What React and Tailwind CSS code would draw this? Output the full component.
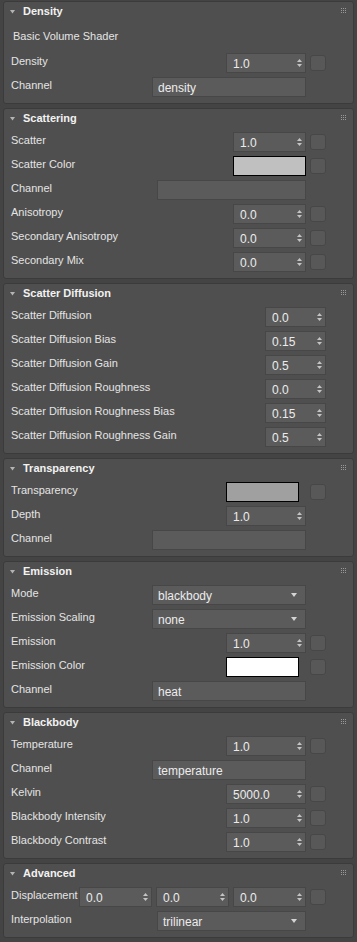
import React from 'react'

const font = { fontFamily: '"Liberation Sans", Arial, sans-serif' }

function Grip() {
  return (
    <div className="ml-auto mr-[7px] mt-[6px] grid grid-cols-3 gap-[1px]">
      {Array.from({ length: 9 }).map((_, i) => (
        <span key={i} className="block w-[1px] h-[1px] bg-[#9a9a9a]" />
      ))}
    </div>
  )
}

function Panel({ title, children }) {
  return (
    <div className="bg-[#4f4f4f] border border-[#3b3b3b] rounded-[3px]">
      <div className="flex items-start h-[23px] pl-[6px]">
        <svg width="5" height="4" viewBox="0 0 5 4" className="mt-[8px]">
          <path d="M0 0 H5 L2.5 3.5 Z" fill="#b4b4b4" />
        </svg>
        <span className="ml-[8px] pt-[2px] text-[11px] leading-[14px] font-bold text-[#f2f2f2]">{title}</span>
        <Grip />
      </div>
      <div className="flex flex-col gap-[4px] pb-[6px]">{children}</div>
    </div>
  )
}

function Row({ label, children, check, spacer = true }) {
  return (
    <div className="flex items-start h-5 pl-[7px] pr-[27px]">
      <span className="flex-1 text-[11px] leading-4 text-[#e4e4e4] whitespace-nowrap">{label}</span>
      {children}
      {check ? (
        <div className="ml-[4px] w-4 h-4 mt-[2px] rounded-[3px] bg-[#585858] border border-[#474747]" />
      ) : spacer ? (
        <div className="ml-[4px] w-4" />
      ) : null}
    </div>
  )
}

function Spinner({ value, w = 'w-[80px]' }) {
  return (
    <div className={`${w} h-5 flex items-center bg-[#5b5b5b] border border-[#474747] pl-[6px] pr-[3px]`}>
      <span className="flex-1 text-[12px] text-[#ececec] leading-none pt-[2px]">{value}</span>
      <svg width="5" height="8" viewBox="0 0 5 8">
        <path d="M0 3 L2.5 0 L5 3 Z" fill="#c4c4c4" />
        <path d="M0 5 L5 5 L2.5 8 Z" fill="#c4c4c4" />
      </svg>
    </div>
  )
}

function TextBox({ value = '', w = 'w-[154px]' }) {
  return (
    <div className={`${w} h-5 flex items-center bg-[#5b5b5b] border border-[#474747] pl-[5px]`}>
      <span className="text-[12px] text-[#ececec] leading-none pt-[2px]">{value}</span>
    </div>
  )
}

function Dropdown({ value, w = 'w-[154px]' }) {
  return (
    <div className={`${w} h-5 flex items-center bg-[#5b5b5b] border border-[#474747] pl-[5px] pr-[8px]`}>
      <span className="flex-1 text-[12px] text-[#ececec] leading-none pt-[2px]">{value}</span>
      <svg width="6" height="4" viewBox="0 0 6 4">
        <path d="M0 0 H6 L3 4 Z" fill="#d4d4d4" />
      </svg>
    </div>
  )
}

function Swatch({ color, w = 'w-[73px]' }) {
  return <div className={`${w} h-5 border border-black ${color}`} />
}

export default function App() {
  return (
    <div className="min-h-[942px] bg-[#444444] px-[3px] pt-[1px] flex flex-col gap-[4px]" style={font}>
      <Panel title="Density">
        <div className="h-6 pl-[9px] flex items-start pt-[3px] text-[11px] leading-4 text-[#e4e4e4]">Basic Volume Shader</div>
        <Row label="Density" check>
          <Spinner value="1.0" />
        </Row>
        <Row label="Channel">
          <TextBox value="density" />
        </Row>
      </Panel>

      <Panel title="Scattering">
        <Row label="Scatter" check>
          <Spinner value="1.0" w="w-[73px]" />
        </Row>
        <Row label="Scatter Color" check>
          <Swatch color="bg-[#c0c0c0]" />
        </Row>
        <Row label="Channel">
          <TextBox w="w-[149px]" />
        </Row>
        <Row label="Anisotropy" check>
          <Spinner value="0.0" w="w-[73px]" />
        </Row>
        <Row label="Secondary Anisotropy" check>
          <Spinner value="0.0" w="w-[73px]" />
        </Row>
        <Row label="Secondary Mix" check>
          <Spinner value="0.0" w="w-[73px]" />
        </Row>
      </Panel>

      <Panel title="Scatter Diffusion">
        <Row label="Scatter Diffusion" spacer={false}>
          <Spinner value="0.0" w="w-[61px]" />
        </Row>
        <Row label="Scatter Diffusion Bias" spacer={false}>
          <Spinner value="0.15" w="w-[61px]" />
        </Row>
        <Row label="Scatter Diffusion Gain" spacer={false}>
          <Spinner value="0.5" w="w-[61px]" />
        </Row>
        <Row label="Scatter Diffusion Roughness" spacer={false}>
          <Spinner value="0.0" w="w-[61px]" />
        </Row>
        <Row label="Scatter Diffusion Roughness Bias" spacer={false}>
          <Spinner value="0.15" w="w-[61px]" />
        </Row>
        <Row label="Scatter Diffusion Roughness Gain" spacer={false}>
          <Spinner value="0.5" w="w-[61px]" />
        </Row>
      </Panel>

      <Panel title="Transparency">
        <Row label="Transparency" check>
          <Swatch color="bg-[#a0a0a0]" />
          <div className="w-[7px]" />
        </Row>
        <Row label="Depth">
          <Spinner value="1.0" />
        </Row>
        <Row label="Channel">
          <TextBox />
        </Row>
      </Panel>

      <Panel title="Emission">
        <Row label="Mode">
          <Dropdown value="blackbody" />
        </Row>
        <Row label="Emission Scaling">
          <Dropdown value="none" />
        </Row>
        <Row label="Emission" check>
          <Spinner value="1.0" />
        </Row>
        <Row label="Emission Color" check>
          <Swatch color="bg-white" />
          <div className="w-[7px]" />
        </Row>
        <Row label="Channel">
          <TextBox value="heat" />
        </Row>
      </Panel>

      <Panel title="Blackbody">
        <Row label="Temperature" check>
          <Spinner value="1.0" />
        </Row>
        <Row label="Channel">
          <TextBox value="temperature" />
        </Row>
        <Row label="Kelvin" check>
          <Spinner value="5000.0" />
        </Row>
        <Row label="Blackbody Intensity" check>
          <Spinner value="1.0" />
        </Row>
        <Row label="Blackbody Contrast" check>
          <Spinner value="1.0" />
        </Row>
      </Panel>

      <Panel title="Advanced">
        <Row label="Displacement" check>
          <div className="flex gap-[4px]">
            <Spinner value="0.0" w="w-[73px]" />
            <Spinner value="0.0" w="w-[73px]" />
            <Spinner value="0.0" w="w-[73px]" />
          </div>
        </Row>
        <Row label="Interpolation">
          <Dropdown value="trilinear" w="w-[149px]" />
        </Row>
      </Panel>
    </div>
  )
}
